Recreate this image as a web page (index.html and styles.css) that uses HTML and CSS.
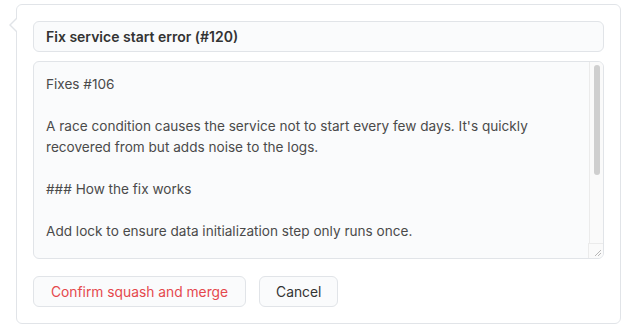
FILE: index.html
```html
<!DOCTYPE html>
<html lang="en">
<head>
    <meta charset="utf-8">
    <meta name="viewport" content="width=device-width, initial-scale=1.0">
    <title>Squash and merge</title>
    <link rel="stylesheet" href="styles.css">
</head>

<body>
    <div class="merge-box">
        <input class="commit-title" type="text" value="Fix service start error (#120)">
        <div class="body-wrap">
            <textarea class="commit-body">Fixes #106

A race condition causes the service not to start every few days. It's quickly recovered from but adds noise to the logs.

### How the fix works

Add lock to ensure data initialization step only runs once.

### Testing

Ran the service start loop 500 times locally without a failure.
Added a regression test for concurrent start calls.

Co-authored-by: Sam Lee</textarea>
            <!-- drawn scrollbar, the headless browser hides the native one -->
            <div class="scrollbar"><div class="thumb"></div></div>
            <div class="scroll-corner">
                <svg width="14" height="14" viewBox="0 0 14 14">
                    <path d="M6 12 L12 6 M9 12 L12 9" stroke="#b8b8b8" stroke-width="1" fill="none"/>
                </svg>
            </div>
        </div>
        <div class="actions">
            <button class="btn btn-danger">Confirm squash and merge</button>
            <button class="btn">Cancel</button>
        </div>
    </div>
</body></html>
```

FILE: styles.css
```css
body {
    margin: 0;
    padding: 4px 8px 0 16px;
    font-family: Inter, "Noto Sans", sans-serif;
    background-color: #fff;
}

.merge-box {
    position: relative;
    width: 571px;
    padding: 16px;
    border: 1px solid #e1e4e8;
    border-radius: 6px;
    background-color: #fff;
}

/* little pointer on the left edge */
.merge-box::before,
.merge-box::after {
    content: "";
    position: absolute;
    top: 12px;
    width: 0;
    height: 0;
    border: 8px solid transparent;
}

.merge-box::before {
    left: -16px;
    border-right-color: #e1e4e8;
}

.merge-box::after {
    left: -14px;
    border-right-color: #fff;
}

.commit-title {
    display: block;
    box-sizing: border-box;
    width: 100%;
    height: 31px;
    margin: 0 0 9px 0;
    padding: 0 12px;
    border: 1px solid #e1e4e8;
    border-radius: 6px;
    background-color: #fafbfc;
    font-family: Inter, "Noto Sans", sans-serif;
    font-size: 14px;
    font-weight: 600;
    color: #333;
    outline: none;
}

.body-wrap {
    position: relative;
}

.commit-body {
    display: block;
    box-sizing: border-box;
    width: 100%;
    height: 198px;
    margin: 0;
    padding: 12px 28px 10px 12px;
    border: 1px solid #e1e4e8;
    border-radius: 6px;
    background-color: #fafbfc;
    font-family: Inter, "Noto Sans", sans-serif;
    font-size: 13.6px;
    line-height: 21px;
    color: #4a4a4a;
    resize: none;
    overflow: hidden;
    outline: none;
}

.scrollbar {
    position: absolute;
    top: 1px;
    right: 1px;
    bottom: 15px;
    width: 14px;
    box-sizing: border-box;
    padding: 3px 3px 0 4px;
    border-left: 1px solid #ebebeb;
    border-top-right-radius: 5px;
    background-color: #fafafa;
}

.thumb {
    height: 110px;
    border-radius: 4px;
    background-color: #cfcfcf;
}

.scroll-corner {
    position: absolute;
    right: 1px;
    bottom: 1px;
    width: 14px;
    height: 14px;
    border-top: 1px solid #ebebeb;
    border-left: 1px solid #ebebeb;
    border-bottom-right-radius: 5px;
    background-color: #fafafa;
    box-sizing: content-box;
}

.scroll-corner svg {
    display: block;
}

.actions {
    display: flex;
    gap: 13px;
    margin-top: 17px;
}

.btn {
    height: 31px;
    padding: 0 16px;
    border: 1px solid #e1e4e8;
    border-radius: 6px;
    background-color: #fafbfc;
    font-family: Inter, "Noto Sans", sans-serif;
    font-size: 13.8px;
    color: #333;
}

.btn-danger {
    padding: 0 17px;
    color: #e5484d;
}
```
